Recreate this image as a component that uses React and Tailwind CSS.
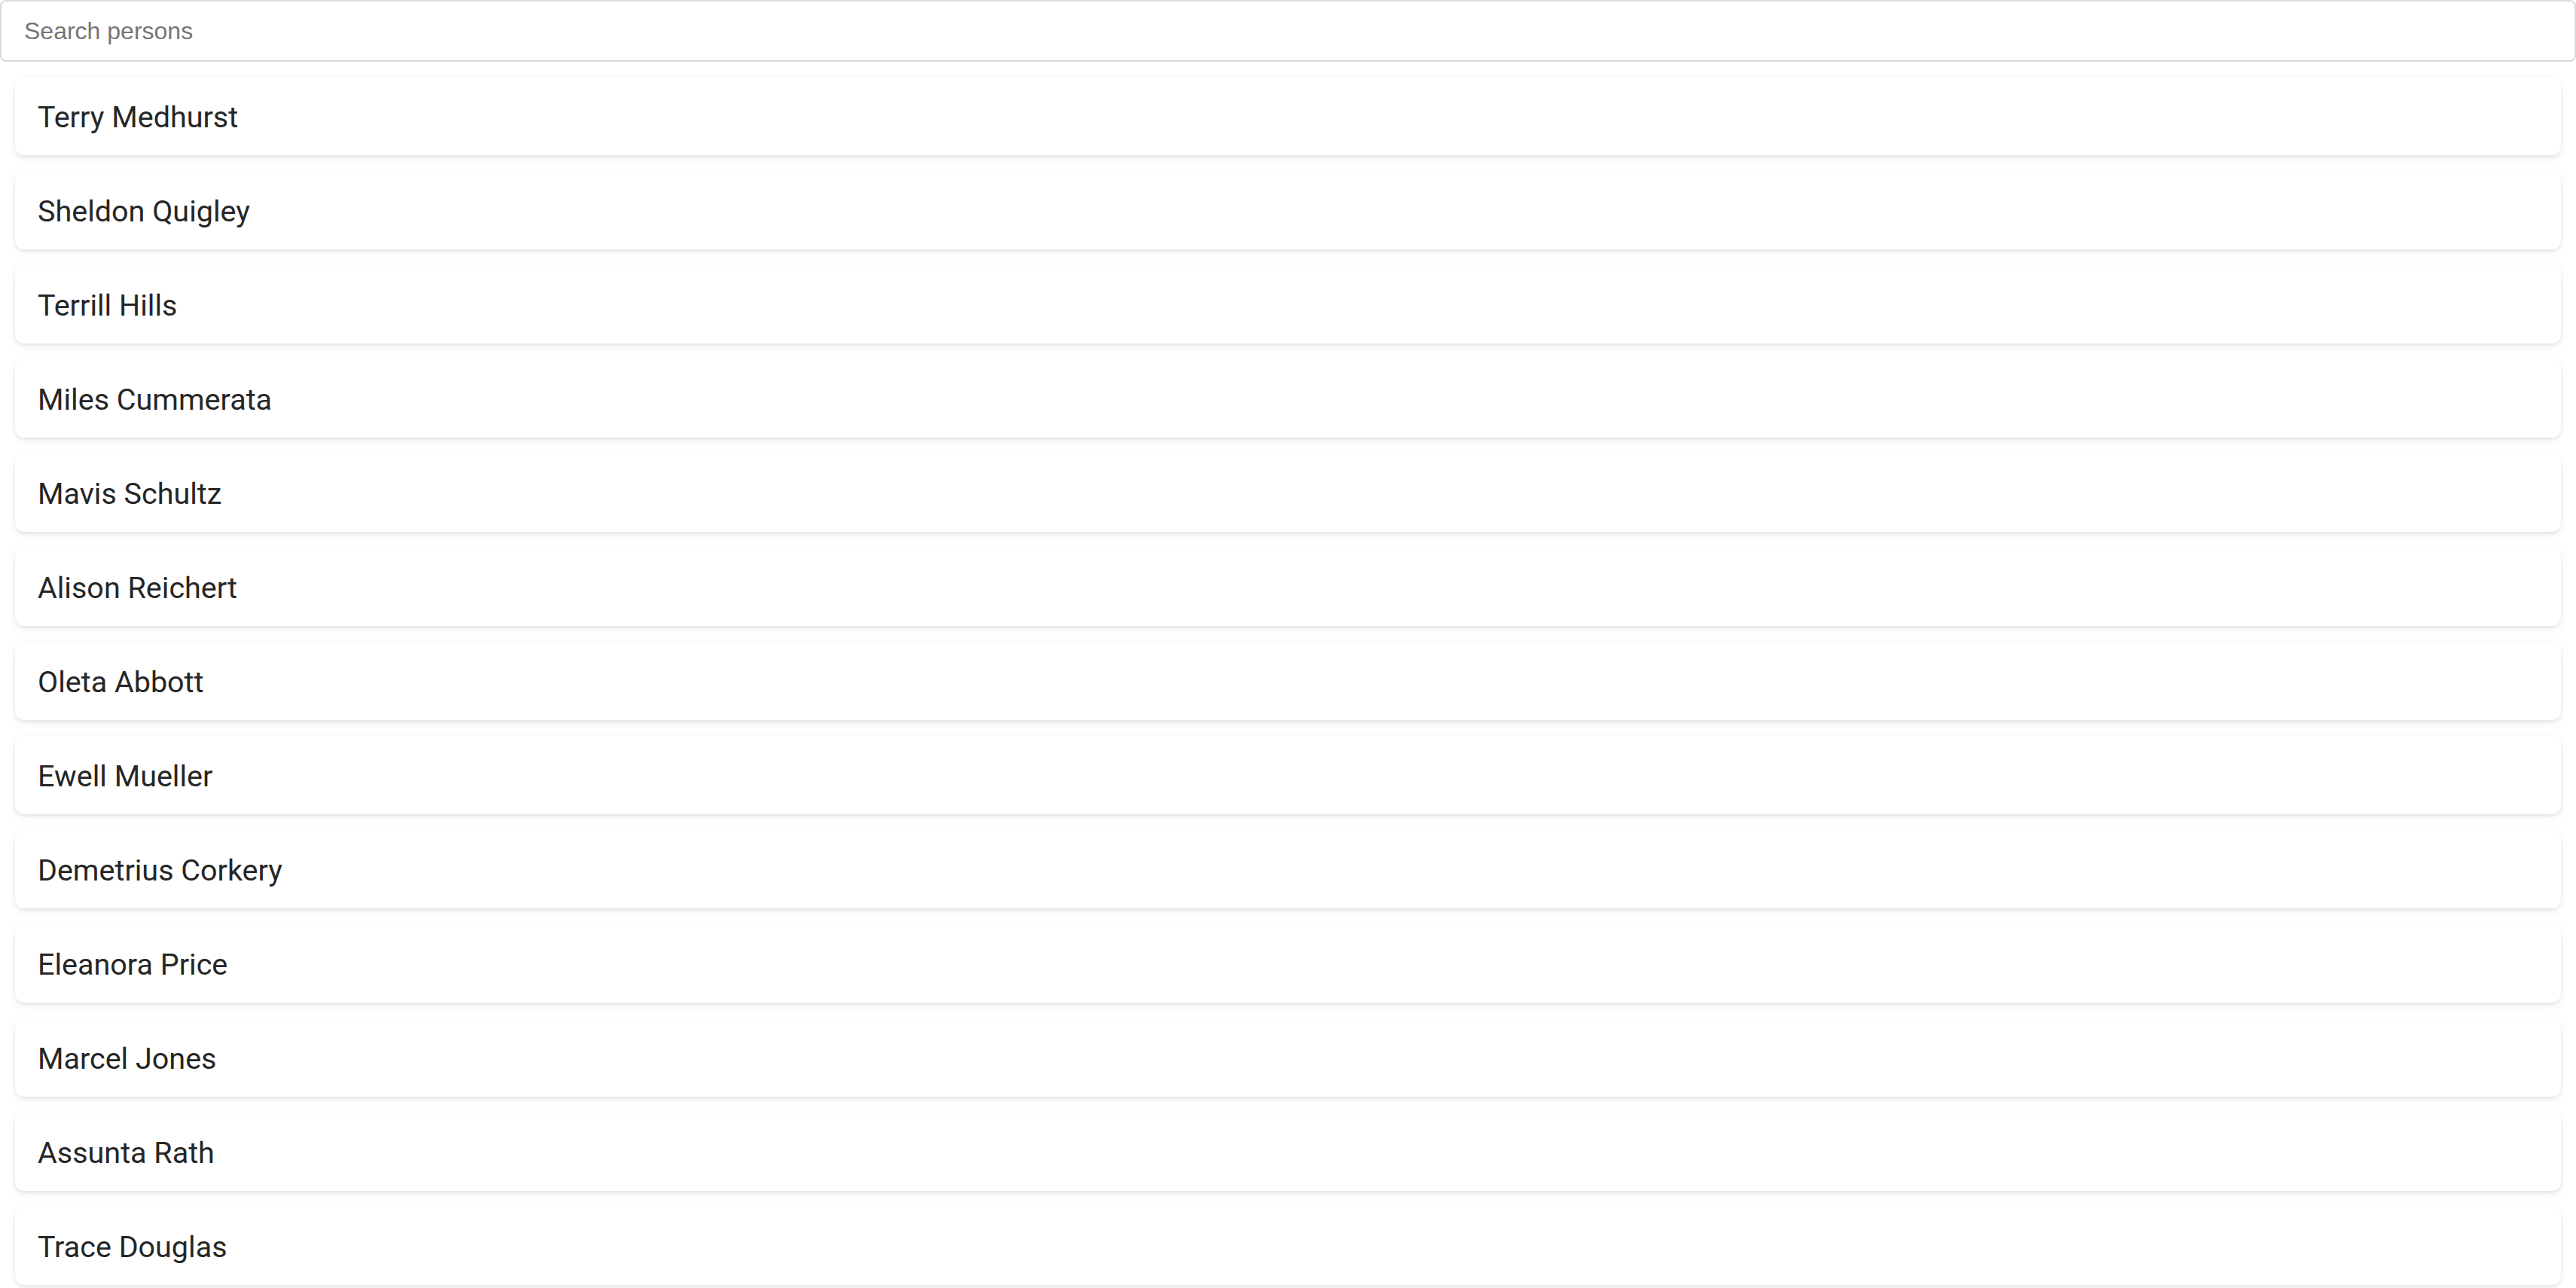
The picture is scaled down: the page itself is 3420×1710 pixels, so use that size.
import { useState } from 'react'

const persons = [
  'Terry Medhurst',
  'Sheldon Quigley',
  'Terrill Hills',
  'Miles Cummerata',
  'Mavis Schultz',
  'Alison Reichert',
  'Oleta Abbott',
  'Ewell Mueller',
  'Demetrius Corkery',
  'Eleanora Price',
  'Marcel Jones',
  'Assunta Rath',
  'Trace Douglas',
]

function PersonCard({ name }) {
  return (
    <div className="flex h-[104px] items-center rounded-[12px] bg-white pl-[30px] pt-[3px] shadow-[0_2px_4px_rgba(0,0,0,0.07),0_4px_12px_rgba(0,0,0,0.06)]">
      <span className="text-[39.5px] leading-none text-[#262626] [font-family:Roboto,'Liberation_Sans',sans-serif]">
        {name}
      </span>
    </div>
  )
}

export default function App() {
  const [query, setQuery] = useState('')
  const filtered = persons.filter((p) => p.toLowerCase().includes(query.toLowerCase()))

  return (
    <div className="min-h-screen bg-white">
      <input
        type="text"
        value={query}
        onChange={(e) => setQuery(e.target.value)}
        placeholder="Search persons"
        className="block h-[82px] w-full rounded-[8px] border-2 border-[#dadada] px-[30px] text-[32px] text-[#333] outline-none placeholder:text-[#757575] [font-family:'Liberation_Sans',Arial,sans-serif]"
      />
      <div className="flex flex-col gap-[21px] px-[20px] pt-[20px]">
        {filtered.map((name) => (
          <PersonCard key={name} name={name} />
        ))}
      </div>
    </div>
  )
}
